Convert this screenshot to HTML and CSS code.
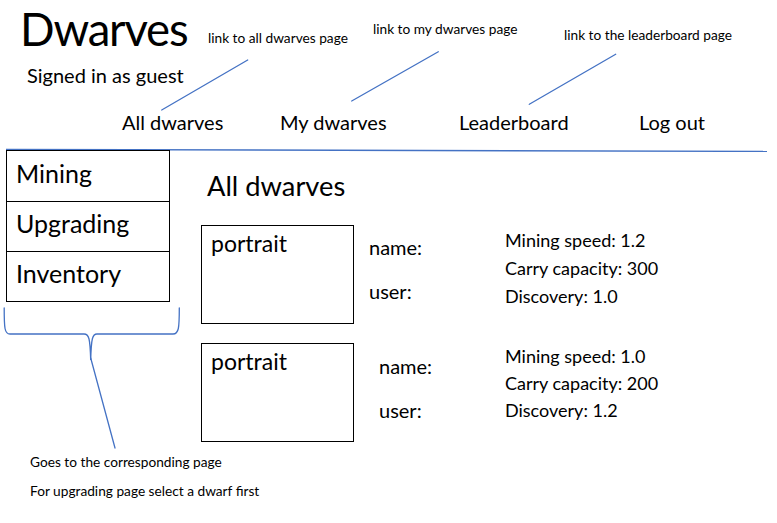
FILE: index.html
```html
<!DOCTYPE html>
<html lang="en">
<head>
<meta charset="utf-8">
<title>Dwarves</title>
<link rel="stylesheet" href="styles.css">
</head>
<body>
<div class="page">
  <header class="header">
    <h1 class="title">Dwarves</h1>
    <p class="signed">Signed in as guest</p>
    <nav class="nav">
      <a class="nav-link">All dwarves</a>
      <a class="nav-link">My dwarves</a>
      <a class="nav-link">Leaderboard</a>
      <a class="nav-link">Log out</a>
    </nav>
  </header>
  <svg class="rule" width="762" height="4" viewBox="0 0 762 4">
    <line x1="0" y1="1.4" x2="761" y2="3.4" stroke="#4472c4" stroke-width="1.4"/>
  </svg>
  <div class="main">
    <aside class="sidebar">
      <div class="side-item">Mining</div>
      <div class="side-item">Upgrading</div>
      <div class="side-item">Inventory</div>
    </aside>
    <section class="content">
      <h2 class="heading">All dwarves</h2>
      <div class="card">
        <div class="portrait">portrait</div>
        <div class="who">
          <div class="who-name">name:</div>
          <div class="who-user">user:</div>
        </div>
        <div class="stats">
          <div>Mining speed: 1.2</div>
          <div>Carry capacity: 300</div>
          <div>Discovery: 1.0</div>
        </div>
      </div>
      <div class="card card-second">
        <div class="portrait">portrait</div>
        <div class="who">
          <div class="who-name">name:</div>
          <div class="who-user">user:</div>
        </div>
        <div class="stats">
          <div>Mining speed: 1.0</div>
          <div>Carry capacity: 200</div>
          <div>Discovery: 1.2</div>
        </div>
      </div>
    </section>
  </div>

  <svg class="callouts" width="777" height="523" viewBox="0 0 777 523">
    <g fill="none" stroke="#4472c4" stroke-width="1.3" stroke-linecap="round">
      <line x1="247.7" y1="60" x2="161.7" y2="110"/>
      <line x1="438.3" y1="51.7" x2="351.7" y2="101"/>
      <line x1="615.7" y1="54.3" x2="529.3" y2="104.3"/>
      <path d="M4.2 308 C4.2 328 4.5 334 10 334 L84 334 C89 334 90 338 90.7 360 C91.3 338 92.5 334 97 334 L173 334 C178.8 334 179.3 328 179.3 308"/>
      <line x1="90.7" y1="358" x2="115" y2="448"/>
    </g>
  </svg>
  <span class="note note-all">link to all dwarves page</span>
  <span class="note note-my">link to my dwarves page</span>
  <span class="note note-board">link to the leaderboard page</span>
  <span class="note note-goes">Goes to the corresponding page</span>
  <span class="note note-upgrade">For upgrading page select a dwarf first</span>
</div>
</body>
</html>
```
FILE: styles.css
```css
* { box-sizing: border-box; }

html, body {
  margin: 0;
  padding: 0;
  background: #ffffff;
}

body {
  font-family: Lato, "Open Sans", "Liberation Sans", sans-serif;
  color: #000000;
}

.page {
  position: relative;
  width: 777px;
  height: 523px;
  overflow: hidden;
  background: #ffffff;
}

/* ---------- header ---------- */
.header {
  display: flex;
  flex-direction: column;
}

.title {
  margin: 1px 0 0 20px;
  font-size: 45.5px;
  font-weight: 400;
  line-height: 56px;
  letter-spacing: -1.2px;
}

.signed {
  margin: 6px 0 0 27px;
  font-size: 20px;
  line-height: 1.2;
}

.nav {
  display: grid;
  grid-template-columns: 158px 179px 180px auto;
  margin: 23px 0 0 122px;
  font-size: 20px;
  line-height: 1.2;
}

.nav-link {
  color: #000000;
  text-decoration: none;
}

.rule {
  display: block;
  margin: 14px 0 0 6px;
}

/* ---------- main ---------- */
.main {
  display: flex;
  gap: 31px;
  margin: -2px 0 0 6px;
}

.sidebar {
  display: flex;
  flex-direction: column;
  width: 164px;
  height: 152px;
  border: 1px solid #000000;
  border-bottom: 0;
}

.side-item {
  height: 50px;
  padding: 6px 0 0 9px;
  border-bottom: 1px solid #000000;
  font-size: 25px;
  line-height: 1.2;
}

.side-item:first-child {
  height: 51px;
  padding-top: 7px;
}

.content {
  display: flex;
  flex-direction: column;
}

.heading {
  margin: 19px 0 0 6px;
  font-size: 27.3px;
  font-weight: 400;
  line-height: 34px;
}

.card {
  display: flex;
  margin-top: 22px;
}

.card-second {
  margin-top: 19px;
}

.portrait {
  width: 153px;
  height: 99px;
  padding: 4px 0 0 9px;
  border: 1px solid #000000;
  font-size: 23px;
  line-height: 1.2;
}

.who {
  display: flex;
  flex-direction: column;
  gap: 20px;
  width: 136px;
  margin-left: 15px;
  padding-top: 10px;
  font-size: 20px;
  line-height: 24px;
}

.card-second .who {
  width: 126px;
  margin-left: 25px;
  padding-top: 11px;
  gap: 20px;
}

.stats {
  display: flex;
  flex-direction: column;
  padding-top: 1px;
  font-size: 18px;
  line-height: 28px;
  white-space: nowrap;
}

.card-second .stats {
  padding-top: 0;
  line-height: 27px;
}

/* ---------- annotations (diagram callouts) ---------- */
.callouts {
  position: absolute;
  left: 0;
  top: 0;
  pointer-events: none;
}

.note {
  position: absolute;
  font-size: 13.7px;
  line-height: 1.2;
  white-space: nowrap;
}

.note-all { left: 208px; top: 30px; }
.note-my { left: 373px; top: 21px; }
.note-board { left: 564px; top: 27px; }
.note-goes { left: 30px; top: 454px; }
.note-upgrade { left: 30px; top: 483px; }
```
